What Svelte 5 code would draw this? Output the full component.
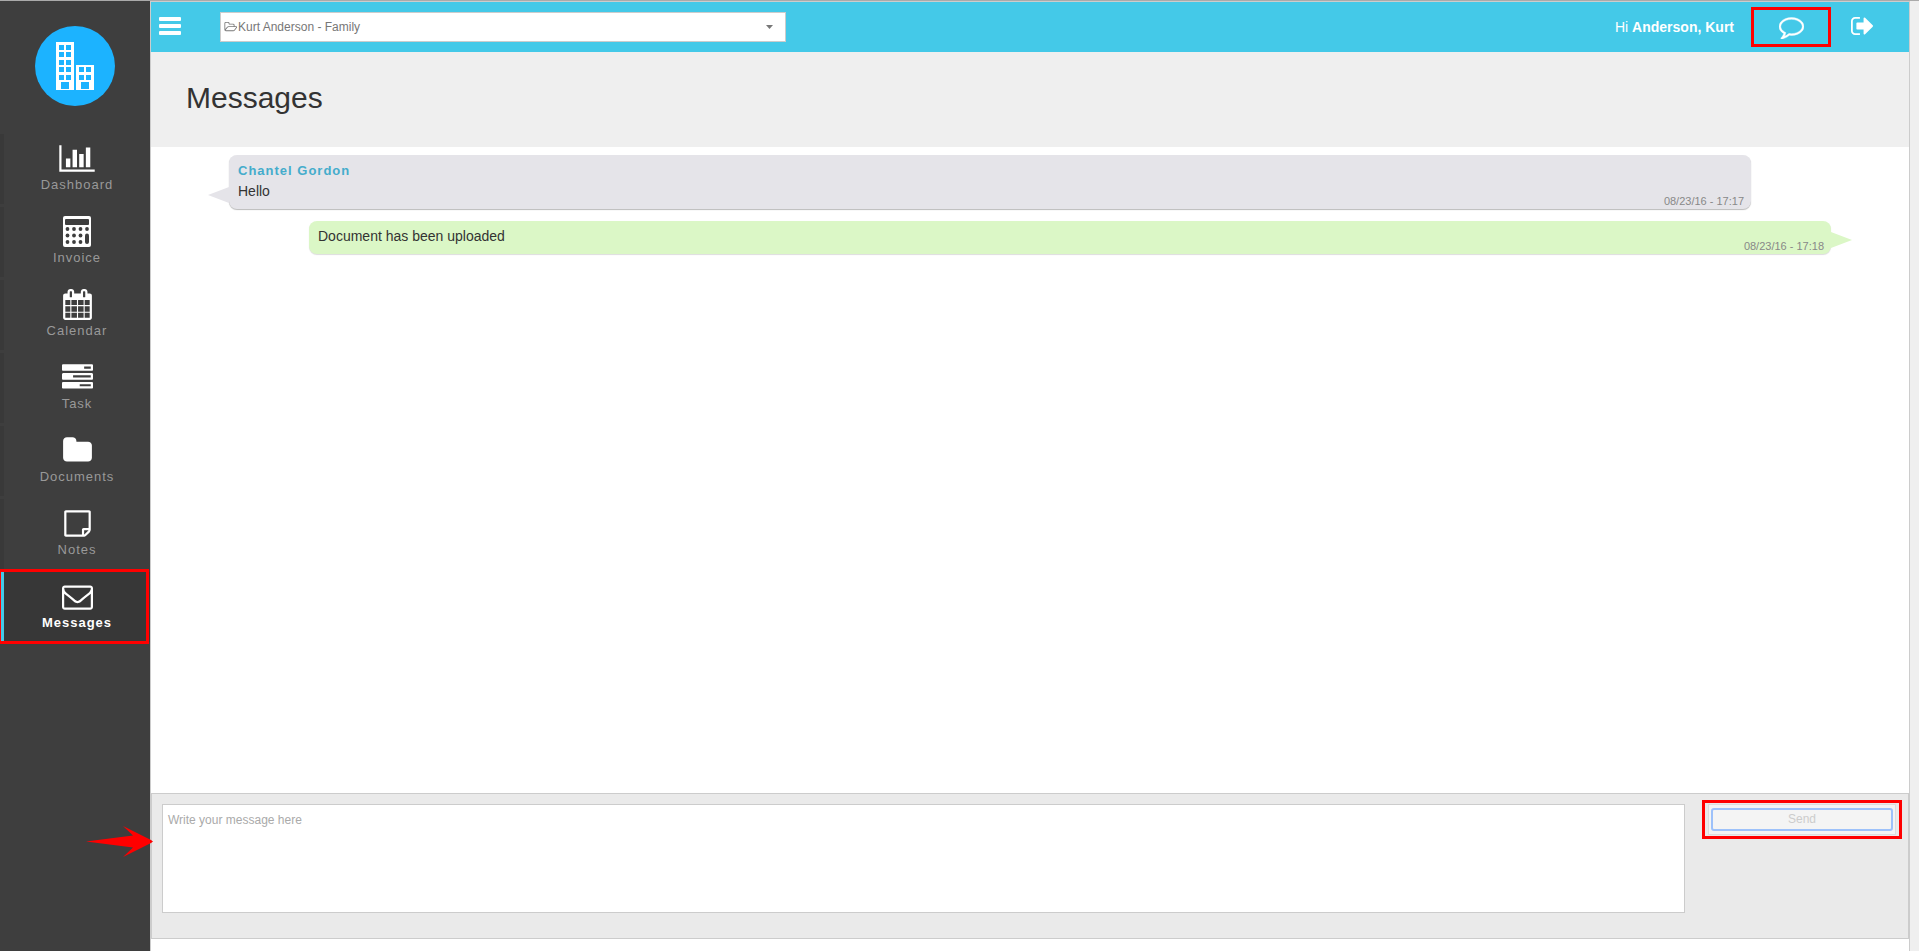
<script lang="ts">
  const navItems = [
    { id: 'dashboard', label: 'Dashboard' },
    { id: 'invoice', label: 'Invoice' },
    { id: 'calendar', label: 'Calendar' },
    { id: 'task', label: 'Task' },
    { id: 'documents', label: 'Documents' },
    { id: 'notes', label: 'Notes' },
    { id: 'messages', label: 'Messages' }
  ];

  const messages = [
    { author: 'Chantel Gordon', text: 'Hello', time: '08/23/16 - 17:17', mine: false },
    { author: '', text: 'Document has been uploaded', time: '08/23/16 - 17:18', mine: true }
  ];

  const icons: Record<string, string> = {
    calendar: 'M192 1664h288v-288h-288v288zm352 0h320v-288h-320v288zm-352-352h288v-320h-288v320zm352 0h320v-320h-320v320zm-352-384h288v-288h-288v288zm736 736h320v-288h-320v288zm-384-736h320v-288h-320v288zm768 736h288v-288h-288v288zm-384-352h320v-320h-320v320zm-352-864v-288q0-13-9.5-22.5t-22.5-9.5h-64q-13 0-22.5 9.5t-9.5 22.5v288q0 13 9.5 22.5t22.5 9.5h64q13 0 22.5-9.5t9.5-22.5zm736 864h288v-320h-288v320zm-384-384h320v-288h-320v288zm384 0h288v-288h-288v288zm32-480v-288q0-13-9.5-22.5t-22.5-9.5h-64q-13 0-22.5 9.5t-9.5 22.5v288q0 13 9.5 22.5t22.5 9.5h64q13 0 22.5-9.5t9.5-22.5zm384-64v1280q0 52-38 90t-90 38h-1408q-52 0-90-38t-38-90v-1280q0-52 38-90t90-38h128v-96q0-66 47-113t113-47h64q66 0 113 47t47 113v96h384v-96q0-66 47-113t113-47h64q66 0 113 47t47 113v96h128q52 0 90 38t38 90z',
    task: 'M1024 1408h640v-128h-640v128zm-384-512h1024v-128h-1024v128zm640-512h384v-128h-384v128zm512 832v256q0 26-19 45t-45 19h-1664q-26 0-45-19t-19-45v-256q0-26 19-45t45-19h1664q26 0 45 19t19 45zm0-512v256q0 26-19 45t-45 19h-1664q-26 0-45-19t-19-45v-256q0-26 19-45t45-19h1664q26 0 45 19t19 45zm0-512v256q0 26-19 45t-45 19h-1664q-26 0-45-19t-19-45v-256q0-26 19-45t45-19h1664q26 0 45 19t19 45z',
    documents: 'M1728 608v704q0 92-66 158t-158 66h-1216q-92 0-158-66t-66-158v-960q0-92 66-158t158-66h320q92 0 158 66t66 158v32h672q92 0 158 66t66 158z',
    notes: 'M1528 1280h-248v248q29-10 41-22l185-185q12-12 22-41zm-280-128h288v-896h-1280v1280h896v-288q0-40 28-68t68-28zm416-928v1024q0 40-20 88t-48 76l-184 184q-28 28-76 48t-88 20h-1024q-40 0-68-28t-28-68v-1344q0-40 28-68t68-28h1344q40 0 68 28t28 68z',
    messages: 'M1664 1504v-768q-32 36-69 66-268 206-426 338-51 43-83 67t-86.5 48.5-102.5 24.5h-2q-48 0-102.5-24.5t-86.5-48.5-83-67q-158-132-426-338-37-30-69-66v768q0 13 9.5 22.5t22.5 9.5h1472q13 0 22.5-9.5t9.5-22.5zm0-1051v-24.5l-.5-13-3-12.5-5.5-9-9-7.5-14-2.5h-1472q-13 0-22.5 9.5t-9.5 22.5q0 168 147 284 193 152 401 317 6 5 35 29.5t46 37.5 44.5 31.5 50.5 27.5 43 9h2q20 0 43-9t50.5-27.5 44.5-31.5 46-37.5 35-29.5q208-165 401-317 54-43 100.5-115.5t46.5-131.5zm128-37v1088q0 66-47 113t-113 47h-1472q-66 0-113-47t-47-113v-1088q0-66 47-113t113-47h1472q66 0 113 47t47 113z'
  };

  let active = $state('messages');
  let draft = $state('');
</script>

<div class="app">
  <aside class="sidebar">
    <a class="logo" href="#home" aria-label="Home">
      <svg width="80" height="80" viewBox="0 0 80 80">
        <circle cx="40" cy="40" r="40" fill="#1cb3ff" />
        <path fill="#fff" d="M21 16h18v48H21zM41 39h18v25H41z" />
        <g fill="#1cb3ff">
          {#each [19, 26, 34, 41, 49] as y}
            <rect x="24" {y} width="5" height="5" />
            <rect x="31" {y} width="5" height="5" />
          {/each}
          {#each [41, 49] as y}
            <rect x="44" {y} width="5" height="5" />
            <rect x="51" {y} width="5" height="5" />
          {/each}
          <rect x="26" y="56" width="8" height="7" />
          <rect x="46" y="56" width="8" height="7" />
        </g>
      </svg>
    </a>

    <nav>
      {#each navItems as item}
        <a class="nav-item" class:active={item.id === active} href="#{item.id}" onclick={() => (active = item.id)}>
          {#if item.id === 'dashboard'}
            <svg width="36" height="31" viewBox="0 0 2048 1792" fill="currentColor">
              <path d="M640 896v512h-256v-512h256zm384-512v1024h-256v-1024h256zm1024 1152v128h-2048v-1536h128v1408h1920zm-640-896v768h-256v-768h256zm384-384v1152h-256v-1152h256z" />
            </svg>
          {:else if item.id === 'invoice'}
            <svg width="31" height="31" viewBox="0 0 31 31">
              <rect x="1" y="0" width="28" height="31" rx="2" fill="#fff" />
              <g fill="#3e3e3e">
                <rect x="3" y="3" width="24" height="6" rx="1" />
                {#each [13, 19.5, 26] as cy}
                  {#each [5.5, 12, 18.5] as cx}
                    <circle {cx} {cy} r="1.9" />
                  {/each}
                {/each}
                <circle cx="25" cy="13" r="1.9" />
                <rect x="23" y="17.500" width="4" height="10.500" rx="2" />
              </g>
            </svg>
          {:else}
            <svg width="31" height="31" viewBox="0 0 1792 1792" fill="currentColor"><path d={icons[item.id]} /></svg>
          {/if}
          <span>{item.label}</span>
        </a>
      {/each}
    </nav>
  </aside>

  <main class="main">
    <header class="topbar">
      <button class="menu" aria-label="Toggle menu">
        <svg width="22" height="18" viewBox="0 0 22 18" fill="#fff">
          <rect width="22" height="4" rx="1" /><rect y="7" width="22" height="4" rx="1" /><rect y="14" width="22" height="4" rx="1" />
        </svg>
      </button>
      <div class="case-select">
        <svg width="13" height="12" viewBox="0 0 1973 1792" fill="#777">
          <path d="M1845 931q0-35-53-35h-1088q-40 0-85.5 21.5t-71.5 52.5l-294 363q-18 24-18 40 0 35 53 35h1088q40 0 86-22t71-53l294-363q18-22 18-39zm-1141-163h768v-160q0-40-28-68t-68-28h-576q-40 0-68-28t-28-68v-64q0-40-28-68t-68-28h-320q-40 0-68 28t-28 68v853l256-315q44-53 116-87.5t140-34.5zm1269 163q0 62-46 120l-295 363q-43 53-116 87.5t-140 34.5h-1088q-92 0-158-66t-66-158v-960q0-92 66-158t158-66h320q92 0 158 66t66 158v32h544q92 0 158 66t66 158v160h192q54 0 99 24.5t67 70.5q15 32 15 68z" />
        </svg>
        <select aria-label="Case">
          <option>Kurt Anderson - Family</option>
        </select>
        <svg width="7" height="4" viewBox="0 0 7 4" fill="#777"><path d="M0 0h7L3.500 4z" /></svg>
      </div>
      <div class="user">
        <span class="greeting">Hi <b>Anderson, Kurt</b></span>
        <button class="chat marked" aria-label="Messages">
          <svg width="25" height="25" viewBox="0 0 1792 1792" fill="#fff" stroke="#fff" stroke-width="30">
            <path d="M896 384q-204 0-381.500 69.500t-282 187.500-104.500 255q0 112 71.500 213.500t201.500 175.500l87 50-27 96q-24 91-70 172 152-63 275-171l43-38 57 6q69 8 130 8 204 0 381.500-69.500t282-187.500 104.500-255-104.500-255-282-187.500-381.500-69.500zm896 512q0 174-120 321.500t-326 233-450 85.500q-70 0-145-8-198 175-460 242-49 14-114 22h-5q-15 0-27-10.500t-16-27.500v-1q-3-4-.5-12t2-10 4.500-9.500l6-9 7-8.500 8-9q7-8 31-34.500t34.500-38 31-39.500 32.500-51 27-59 26-76q-157-89-247.500-220t-90.500-281q0-174 120-321.500t326-233 450-85.500 450 85.500 326 233 120 321.500z" />
          </svg>
        </button>
        <button class="logout" aria-label="Sign out">
          <svg width="22" height="18" viewBox="64 256 1568 1280" fill="#fff">
            <path d="M704 1440q0 4 1 20t.5 26.500-3 23.500-10 19.500-20.500 6.500h-320q-119 0-203.500-84.500t-84.500-203.500v-704q0-119 84.500-203.500t203.500-84.500h320q13 0 22.500 9.500t9.500 22.500q0 4 1 20t.5 26.500-3 23.500-10 19.500-20.500 6.500h-320q-66 0-113 47t-47 113v704q0 66 47 113t113 47h312l11.500 1 11.500 3 8 5.500 7 9 2 13.500zm928-544q0 26-19 45l-544 544q-19 19-45 19t-45-19-19-45v-288h-448q-26 0-45-19t-19-45v-384q0-26 19-45t45-19h448v-288q0-26 19-45t45-19 45 19l544 544q19 19 19 45z" />
          </svg>
        </button>
      </div>
    </header>

    <div class="page-title"><h1>Messages</h1></div>

    <section class="messages">
      {#each messages as message}
        <article class="bubble" class:mine={message.mine}>
          {#if message.author}<h2>{message.author}</h2>{/if}
          <p>{message.text}</p>
          <time>{message.time}</time>
        </article>
      {/each}
    </section>

    <form class="composer" onsubmit={(e) => e.preventDefault()}>
      <svg class="pointer" width="67" height="31" viewBox="0 0 67 31" fill="#f00">
        <path d="M0 15.500L47 9.500L37 0L65 14L67 15.500L65 17L37 31L47 21.500Z" />
      </svg>
      <textarea aria-label="Message" placeholder="Write your message here" bind:value={draft}></textarea>
      <div class="send-box marked">
        <button class="send" type="submit" disabled={!draft}><span>Send</span></button>
      </div>
    </form>
  </main>
</div>

<style>
  :global(body) { margin: 0; }
  .app {
    display: flex;
    min-height: 100vh;
    box-sizing: border-box;
    border-top: 1px solid #aaa;
    padding-right: 9px;
    background: #efefef;
    color: #333;
    font-family: "Liberation Sans", Arial, sans-serif;
  }
  button { background: none; border: none; padding: 0; cursor: pointer; font-family: inherit; }
  svg { display: block; flex-shrink: 0; }

  .sidebar { width: 150px; flex-shrink: 0; background: #3e3e3e; }
  .logo { display: flex; justify-content: center; padding: 25px 0 28px; }
  nav { display: flex; flex-direction: column; gap: 3px; }
  .nav-item {
    position: relative;
    display: flex;
    flex-direction: column;
    align-items: center;
    height: 70px;
    box-sizing: border-box;
    padding-top: 9px;
    border-left: 4px solid #393939;
    color: #fff;
    text-decoration: none;
  }
  .nav-item span { margin-top: 3px; color: #999; font-size: 13px; line-height: 16px; letter-spacing: 1px; }
  .nav-item.active { background: #373737; border-left-color: #44c9e8; }
  .nav-item.active span { color: #fff; font-weight: bold; }
  .nav-item.active::after { content: ''; position: absolute; inset: -3px 1px -2px -6px; border: 3px solid #f00; }

  .main {
    display: flex;
    flex-direction: column;
    flex: 1;
    min-width: 0;
    padding-bottom: 12px;
    border: 1px solid #ccc;
    border-bottom: none;
    background: #fff;
  }
  .topbar { display: flex; align-items: center; height: 50px; padding: 0 36px 0 8px; background: #44c9e8; }
  .menu { margin: 0 39px 2px 0; }
  .case-select {
    display: flex;
    align-items: center;
    width: 33%;
    height: 30px;
    box-sizing: border-box;
    padding: 0 12px 0 3px;
    border: 1px solid #ccc;
    background: #fff;
  }
  .case-select select {
    flex: 1;
    min-width: 0;
    height: 28px;
    padding: 0 0 0 1px;
    border: none;
    appearance: none;
    background: none;
    color: #777;
    font-family: inherit;
    font-size: 12px;
  }
  .user { display: flex; align-items: center; margin-left: auto; color: #fff; }
  .greeting { font-size: 14px; }
  .marked { box-sizing: border-box; border: 3px solid #f00; }
  .chat { display: flex; justify-content: center; width: 80px; height: 40px; margin-left: 17px; padding-top: 4px; }
  .logout { margin: 0 0 2px 20px; }

  .page-title { height: 95px; padding-left: 35px; background: #efefef; }
  h1 { margin: 0; padding-top: 29px; font-size: 30px; font-weight: normal; line-height: 34px; }

  .messages { flex: 1; padding: 8px 78px; }
  .bubble {
    position: relative;
    box-sizing: border-box;
    margin: 0 80px 12px 0;
    padding: 6px 9px;
    min-height: 33px;
    border-radius: 8px;
    background: #e5e4e9;
    box-shadow: 0 1px 1px #bbb;
  }
  .bubble.mine { margin: 0 0 12px 80px; background: #dbf7c6; box-shadow: 0 1px 1px #ddd; }
  .bubble h2 { margin: 0 0 2px; color: #44accc; font-size: 13px; line-height: 19px; letter-spacing: 1px; }
  .bubble p { margin: 0; font-size: 14px; line-height: 18px; }
  .bubble:not(.mine) p { padding-bottom: 3px; }
  .bubble time { position: absolute; right: 7px; bottom: 1px; color: #888; font-size: 11px; line-height: 13px; }
  .bubble::before {
    content: '';
    position: absolute;
    left: -21px;
    bottom: 6px;
    border: solid transparent;
    border-width: 8px 21px 8px 0;
    border-right-color: #e5e4e9;
  }
  .bubble.mine::before { left: auto; right: -21px; border-width: 8px 0 8px 21px; border-left-color: #dbf7c6; }

  .composer {
    position: relative;
    display: flex;
    align-items: flex-start;
    gap: 17px;
    padding: 10px 6px 25px 10px;
    border: 1px solid #ccc;
    background: #eaeaea;
  }
  .composer textarea {
    flex: 1;
    height: 109px;
    box-sizing: border-box;
    padding: 8px 5px;
    border: 1px solid #ccc;
    border-radius: 0;
    resize: none;
    font-family: inherit;
    font-size: 12px;
    line-height: 14px;
  }
  .composer textarea::placeholder { color: #aaa; }
  .send-box { width: 200px; height: 39px; margin-top: -4px; padding: 1px 3px; }
  .send {
    display: flex;
    width: 100%;
    height: 31px;
    padding: 3px 2px;
    border: 1px solid #ddd;
    background: #f4f4f4;
    color: #ccc;
    font-size: 12px;
  }
  .send span { flex: 1; border: 2px solid #9dc1fa; border-radius: 3px; line-height: 19px; }
  .pointer { position: absolute; left: -66px; top: 32px; }
</style>
